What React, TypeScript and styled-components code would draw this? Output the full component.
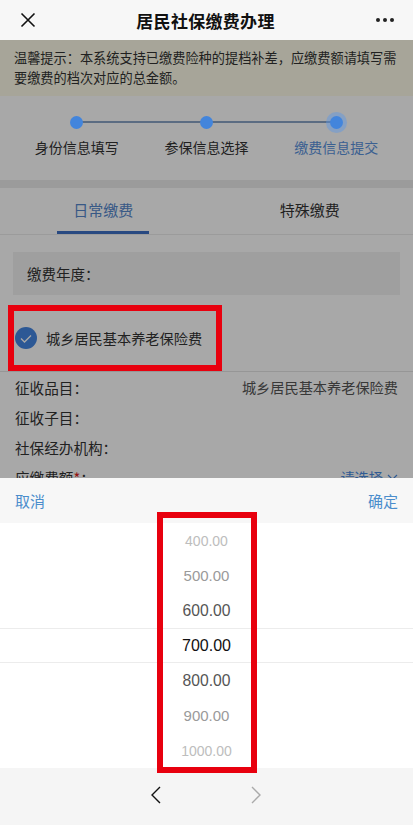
import React from "react";
import styled, { createGlobalStyle } from "styled-components";

const GlobalStyle = createGlobalStyle`
  html, body {
    margin: 0;
    padding: 0;
    background: #ffffff;
  }
  body {
    font-family: "Noto Sans CJK SC", "Noto Sans", sans-serif;
    color: #333333;
  }
  * {
    box-sizing: border-box;
  }
`;

const Screen = styled.div`
  position: relative;
  width: 413px;
  height: 825px;
  overflow: hidden;
  display: flex;
  flex-direction: column;
`;

const NavBar = styled.div`
  height: 40px;
  flex: none;
  background: #f7f7f7;
  display: flex;
  align-items: center;
  justify-content: space-between;
  padding: 0 18px 0 20px;
`;

const NavTitle = styled.div`
  font-size: 17px;
  font-weight: 600;
  color: #111111;
  letter-spacing: 0.3px;
`;

const Viewport = styled.div`
  position: relative;
  flex: 1;
  overflow: hidden;
  background: #ffffff;
`;

const Notice = styled.div`
  height: 56px;
  background: #fdfbe8;
  padding: 8px 12px 0 14px;
  font-size: 13.2px;
  line-height: 20px;
  color: #333333;
`;

const Steps = styled.div`
  height: 84px;
  display: grid;
  grid-template-columns: repeat(3, 1fr);
  padding: 0 12px;
`;

const Step = styled.div<{ $last?: boolean }>`
  position: relative;
  display: flex;
  flex-direction: column;
  align-items: center;

  &::after {
    content: "";
    display: ${(p) => (p.$last ? "none" : "block")};
    position: absolute;
    top: 25px;
    left: 50%;
    width: 100%;
    height: 2px;
    background: #8aa4c6;
  }
`;

const Dot = styled.span<{ $current?: boolean }>`
  position: relative;
  z-index: 1;
  margin-top: 20px;
  width: 13px;
  height: 13px;
  border-radius: 50%;
  background: #4385dc;
  box-shadow: ${(p) =>
    p.$current ? "0 0 0 4px rgba(92, 150, 230, 0.45)" : "none"};
`;

const StepLabel = styled.span<{ $active?: boolean }>`
  margin-top: 8px;
  font-size: 14px;
  line-height: 20px;
  color: ${(p) => (p.$active ? "#5a92dc" : "#333333")};
`;

const Gap = styled.div`
  height: 8px;
  background: #ececec;
`;

const Tabs = styled.div`
  display: flex;
  border-bottom: 1px solid #ececec;
`;

const Tab = styled.div`
  flex: 1;
  height: 46px;
  display: flex;
  flex-direction: column;
  align-items: center;
  justify-content: space-between;
`;

const TabText = styled.span<{ $active?: boolean }>`
  margin-top: 11px;
  font-size: 15px;
  line-height: 22px;
  color: ${(p) => (p.$active ? "#5587cc" : "#333333")};
`;

const TabBar = styled.span<{ $active?: boolean }>`
  width: 92px;
  height: 3px;
  background: ${(p) => (p.$active ? "#3d6fc4" : "transparent")};
`;

const YearBox = styled.div`
  margin: 17px 13px 0;
  height: 43px;
  background: #f2f2f2;
  display: flex;
  align-items: center;
  padding-left: 14px;
  font-size: 14.5px;
  color: #333333;
`;

const CheckRow = styled.div`
  height: 77px;
  padding: 10px 0 0 15px;
  display: flex;
  align-items: center;
  gap: 9px;
  border-bottom: 1px solid #e4e4e4;
  font-size: 14.2px;
  color: #333333;
`;

const CheckCircle = styled.span`
  width: 22px;
  height: 22px;
  border-radius: 50%;
  background: #4486e2;
  display: flex;
  align-items: center;
  justify-content: center;
`;

const InfoRow = styled.div`
  height: 30px;
  padding: 0 15px;
  display: flex;
  align-items: center;
  justify-content: space-between;
  font-size: 14.6px;
  color: #333333;
`;

const InfoValue = styled.span<{ $link?: boolean }>`
  font-size: 14.2px;
  color: ${(p) => (p.$link ? "#4a8be0" : "#555555")};
  display: flex;
  align-items: center;
  gap: 4px;
`;

const Star = styled.span`
  color: #e02020;
`;

const Dim = styled.div`
  position: absolute;
  inset: 0;
  background: rgba(0, 0, 0, 0.34);
`;

const Sheet = styled.div`
  position: absolute;
  left: 0;
  right: 0;
  bottom: 0;
  background: #ffffff;
`;

const SheetBar = styled.div`
  height: 45px;
  background: #f7f7f7;
  display: flex;
  align-items: center;
  justify-content: space-between;
  padding: 0 15px;
  font-size: 15px;
  color: #4b8dcc;
`;

const Wheel = styled.div`
  display: flex;
  flex-direction: column;
`;

const WheelItem = styled.div<{ $size: number; $color: string; $selected?: boolean }>`
  height: 35px;
  display: flex;
  align-items: center;
  justify-content: center;
  font-family: "Liberation Sans", Arial, sans-serif;
  font-size: ${(p) => p.$size}px;
  color: ${(p) => p.$color};
  border-top: ${(p) => (p.$selected ? "1px solid #ececec" : "none")};
  border-bottom: ${(p) => (p.$selected ? "1px solid #ececec" : "none")};
`;

const BottomBar = styled.div`
  height: 57px;
  flex: none;
  background: #f5f5f5;
  display: flex;
  align-items: flex-start;
  justify-content: center;
  gap: 90px;
  padding-top: 18px;
  padding-right: 2px;
`;

const Mark = styled.div<{ $left: number; $top: number; $w: number; $h: number }>`
  position: absolute;
  left: ${(p) => p.$left}px;
  top: ${(p) => p.$top}px;
  width: ${(p) => p.$w}px;
  height: ${(p) => p.$h}px;
  border: 6px solid #e8000e;
  pointer-events: none;
`;

const amounts = [
  { v: "400.00", size: 14, color: "#bdbdbd" },
  { v: "500.00", size: 15, color: "#9a9a9a" },
  { v: "600.00", size: 15.7, color: "#555555" },
  { v: "700.00", size: 16, color: "#111111", selected: true },
  { v: "800.00", size: 15.7, color: "#555555" },
  { v: "900.00", size: 15, color: "#9a9a9a" },
  { v: "1000.00", size: 14, color: "#bdbdbd" },
];

const App = () => {
  return (
    <>
      <GlobalStyle />
      <Screen>
        <NavBar>
          <svg width="16" height="16" viewBox="0 0 16 16">
            <path d="M1.5 1.5 L14.5 14.5 M14.5 1.5 L1.5 14.5" stroke="#111" strokeWidth="1.6" fill="none" />
          </svg>
          <NavTitle>居民社保缴费办理</NavTitle>
          <svg width="20" height="6" viewBox="0 0 20 6">
            <circle cx="3" cy="3" r="2" fill="#222" />
            <circle cx="10" cy="3" r="2" fill="#222" />
            <circle cx="17" cy="3" r="2" fill="#222" />
          </svg>
        </NavBar>

        <Viewport>
          <Notice>
            温馨提示：本系统支持已缴费险种的提档补差，应缴费额请填写需要缴费的档次对应的总金额。
          </Notice>

          <Steps>
            <Step>
              <Dot />
              <StepLabel>身份信息填写</StepLabel>
            </Step>
            <Step>
              <Dot />
              <StepLabel>参保信息选择</StepLabel>
            </Step>
            <Step $last>
              <Dot $current />
              <StepLabel $active>缴费信息提交</StepLabel>
            </Step>
          </Steps>
          <Gap />

          <Tabs>
            <Tab>
              <TabText $active>日常缴费</TabText>
              <TabBar $active />
            </Tab>
            <Tab>
              <TabText>特殊缴费</TabText>
              <TabBar />
            </Tab>
          </Tabs>

          <YearBox>缴费年度：</YearBox>

          <CheckRow>
            <CheckCircle>
              <svg width="12" height="9" viewBox="0 0 12 9">
                <path d="M1 4.5 L4.5 8 L11 1.5" stroke="#fff" strokeWidth="1.3" fill="none" />
              </svg>
            </CheckCircle>
            城乡居民基本养老保险费
          </CheckRow>

          <InfoRow>
            征收品目：<InfoValue>城乡居民基本养老保险费</InfoValue>
          </InfoRow>
          <InfoRow>征收子目：</InfoRow>
          <InfoRow>社保经办机构：</InfoRow>
          <InfoRow>
            <span>
              应缴费额<Star>*</Star>：
            </span>
            <InfoValue $link>
              请选择
              <svg width="11" height="7" viewBox="0 0 11 7">
                <path d="M1 1 L5.5 5.5 L10 1" stroke="#4a8be0" strokeWidth="1.2" fill="none" />
              </svg>
            </InfoValue>
          </InfoRow>

          <Dim />

          <Sheet>
            <SheetBar>
              <span>取消</span>
              <span>确定</span>
            </SheetBar>
            <Wheel>
              {amounts.map((a) => (
                <WheelItem key={a.v} $size={a.size} $color={a.color} $selected={a.selected}>
                  {a.v}
                </WheelItem>
              ))}
            </Wheel>
          </Sheet>
        </Viewport>

        <BottomBar>
          <svg width="11" height="18" viewBox="0 0 11 18">
            <path d="M10 1 L2 9 L10 17" stroke="#111" strokeWidth="1.4" fill="none" />
          </svg>
          <svg width="11" height="18" viewBox="0 0 11 18">
            <path d="M1 1 L9 9 L1 17" stroke="#aaaaaa" strokeWidth="1.4" fill="none" />
          </svg>
        </BottomBar>

        <Mark $left={8} $top={305} $w={214} $h={66} />
        <Mark $left={157} $top={512} $w={100} $h={261} />
      </Screen>
    </>
  );
};

export default App;
